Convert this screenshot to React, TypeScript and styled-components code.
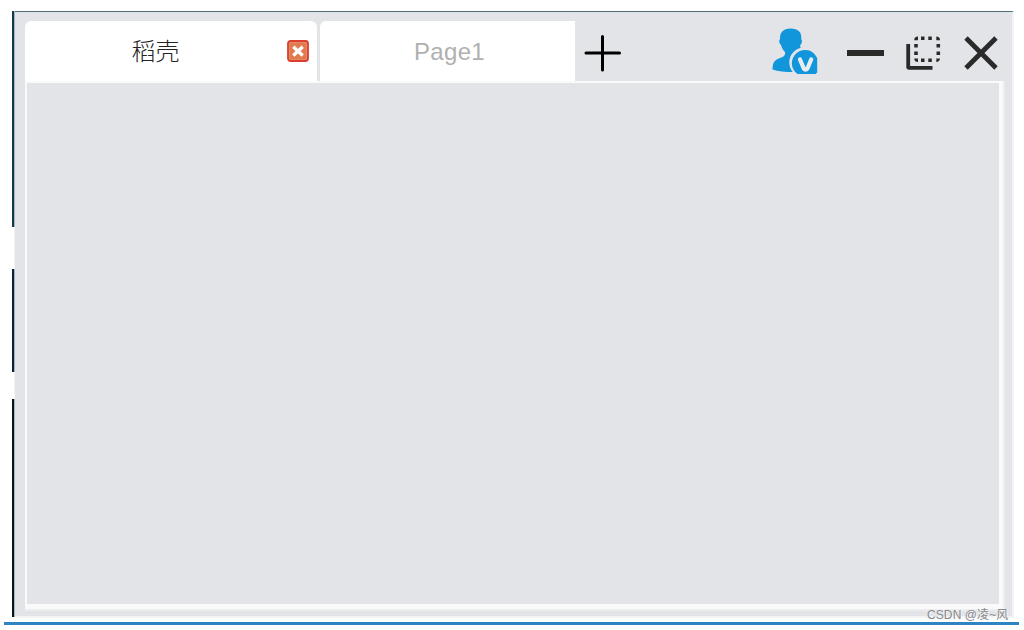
import styled, { createGlobalStyle } from 'styled-components'

const GlobalStyle = createGlobalStyle`
  body {
    margin: 0;
    background-color: #fff;
    overflow: hidden;
  }
`;
const Screen = styled.div`
  position: relative;
  width: 1024px;
  height: 630px;
  box-sizing: border-box;
  padding: 11px 5px 0 4px;
  font-family: "Liberation Sans", "Noto Sans CJK SC", sans-serif;
`;
const WindowRow = styled.div`
  display: flex;
  height: 607px;
  margin-left: 8px;
`;
const Edge = styled.div`
  display: flex;
  flex-direction: column;
  width: 3px;
  height: 606px;
`;
const EdgePart = styled.div<{ $height: number; $color?: string }>`
  height: ${({ $height }) => $height}px;
  background: ${({ $color }) => $color
    ? `linear-gradient(to right, ${$color} 2px, #a9b3bc 2px)`
    : 'linear-gradient(to right, #fff 2px, #f3f3f5 2px)'};
`;
const Frame = styled.div`
  width: 999px;
  box-sizing: border-box;
  border-top: 1px solid #4f6d72;
  border-right: 2px solid #f3f3f5;
  border-bottom: 2px solid #f3f3f5;
  background-color: #e3e4e8;
  padding: 9px 7px 5px 10px;
`;
const TitleBar = styled.div`
  display: flex;
  height: 60px;
`;
const Tab = styled.div<{ $width: number; $active?: boolean }>`
  display: flex;
  align-items: center;
  justify-content: center;
  position: relative;
  width: ${({ $width }) => $width}px;
  box-sizing: border-box;
  margin-right: ${({ $active }) => $active ? 3 : 0}px;
  padding: ${({ $active }) => $active ? '0 31px 4px 0' : '1px 0 0 4px'};
  border-radius: ${({ $active }) => $active ? '6px 6px 0 0' : '6px 0 0 0'};
  background-color: #fff;
  color: ${({ $active }) => $active ? '#222' : '#b0b0b0'};
  font-size: 24px;
  font-weight: ${({ $active }) => $active ? 300 : 400};
  letter-spacing: ${({ $active }) => $active ? 0 : 0.3}px;
`;
const CloseTab = styled.svg`
  position: absolute;
  top: 19px;
  right: 8px;
`;
const AddButton = styled.div`
  display: flex;
  padding: 14px 0 0 9px;
`;
const Controls = styled.div`
  display: flex;
  align-items: flex-start;
  margin-left: auto;
  padding: 7px 7px 0 0;
`;
const Avatar = styled.svg`
  margin-right: 29px;
`;
const Minimize = styled.div`
  width: 37px;
  height: 6px;
  margin: 22px 22px 0 0;
  background-color: #2a2a2a;
`;
const Restore = styled.svg`
  margin: 8px 23px 0 0;
`;
const CloseWindow = styled.svg`
  margin-top: 8px;
`;
const PanelEdge = styled.div`
  height: 530px;
  box-sizing: border-box;
  border: solid #ededef;
  border-width: 0 2px 2px 0;
`;
const Panel = styled.div`
  height: 528px;
  box-sizing: border-box;
  border: solid #fafafa;
  border-width: 2px 4px 5px 2px;
`;
const BottomBar = styled.div`
  height: 3px;
  margin-top: 4px;
  background-color: #2e84c2;
`;
const Watermark = styled.div`
  position: absolute;
  top: 607px;
  left: 927px;
  color: #88898c;
  font-size: 12px;
  line-height: 17px;
  letter-spacing: 0.1px;
  white-space: nowrap;
  text-shadow: 1px 1px 0 #fffa;
`;

const edgeParts = [
  { height: 216, color: '#103b4c' },
  { height: 42 },
  { height: 103, color: '#0a2238' },
  { height: 27 },
  { height: 218, color: '#07151d' },
];

export default function App() {
  return (
    <>
      <GlobalStyle />
      <Screen>
        <WindowRow>
          <Edge>
            {edgeParts.map(({ height, color }, i) => (
              <EdgePart key={i} $height={height} $color={color} />
            ))}
          </Edge>
          <Frame>
            <TitleBar>
              <Tab $width={292} $active>
                稻壳
                <CloseTab width="22" height="22" viewBox="0 0 22 22">
                  <rect x="1" y="1" width="20" height="20" rx="2.5" fill="#e07b4f" stroke="#dc3f30" strokeWidth="1.8" />
                  <rect x="2.5" y="2.5" width="17" height="17" rx="1" fill="none" stroke="#e58a66" />
                  <path d="M6.3 6.8L15.7 15.4M15.7 6.8L6.3 15.4" stroke="#fff" strokeWidth="3.4" />
                </CloseTab>
              </Tab>
              <Tab $width={255}>Page1</Tab>
              <AddButton>
                <svg width="38" height="38" viewBox="0 0 38 38" stroke="#000" strokeWidth="3" strokeLinecap="round">
                  <path d="M2 18H35.5M18.5 1.5V35" />
                </svg>
              </AddButton>
              <Controls>
                <Avatar width="46" height="47" viewBox="0 0 46 47">
                  <path
                    d="M18.5 0.5C11 0.5 7.5 5 8 11C6.5 13 7.2 15.5 9 17C9.8 20.5 11.5 22.5 13 24C13.5 27.5 12 28.7 8 30C3 32 .5 34 .5 41.5C6 43.5 13 44 22 44L30 20C28.5 20 28 19.5 28.3 17C30 15.5 30.4 13 29.3 11C30 4 26 .5 18.5 .5Z"
                    fill="#1296db"
                  />
                  <path d="M24 47A15 15 0 1 1 46 28.5V47Z" fill="#e3e4e8" />
                  <path d="M25.5 46A13.2 13.2 0 1 1 45.2 30V44.5L43.5 46Z" fill="#1296db" />
                  <path d="M28 31.5L31.8 40.5Q33.6 43 35.4 40.5L39.2 31.5" fill="none" stroke="#e9edf1" strokeWidth="4.2" strokeLinecap="round" strokeLinejoin="round" />
                </Avatar>
                <Minimize />
                <Restore width="35" height="35" viewBox="0 0 35 35" fill="none" stroke="#2a2a2a">
                  <path d="M2.2 8V31Q2.2 31.8 3.2 31.8H26.5" strokeWidth="3.8" />
                  <path d="M15 2.3H18.5M22.3 2.3H25.8M15 24.3H18.5M22.3 24.3H25.8M10 8V11.5M10 15.5V19M32.3 8V11.5M32.3 15.5V19" strokeWidth="3.6" />
                  <path d="M8.2 4.2A3.8 3.8 0 0 1 12 .5V4.2ZM30.3 .5A3.8 3.8 0 0 1 34 4.2H30.3ZM8.2 22.5A3.8 3.8 0 0 0 12 26V22.5ZM34 22.5A3.8 3.8 0 0 1 30.3 26V22.5Z" fill="#2a2a2a" stroke="none" />
                </Restore>
                <CloseWindow width="34" height="34" viewBox="0 0 34 34">
                  <path d="M2 2L32 32M32 2L2 32" stroke="#2a2a2a" strokeWidth="4.8" />
                </CloseWindow>
              </Controls>
            </TitleBar>
            <PanelEdge>
              <Panel />
            </PanelEdge>
          </Frame>
        </WindowRow>
        <BottomBar />
        <Watermark>CSDN @凌~风</Watermark>
      </Screen>
    </>
  );
}
